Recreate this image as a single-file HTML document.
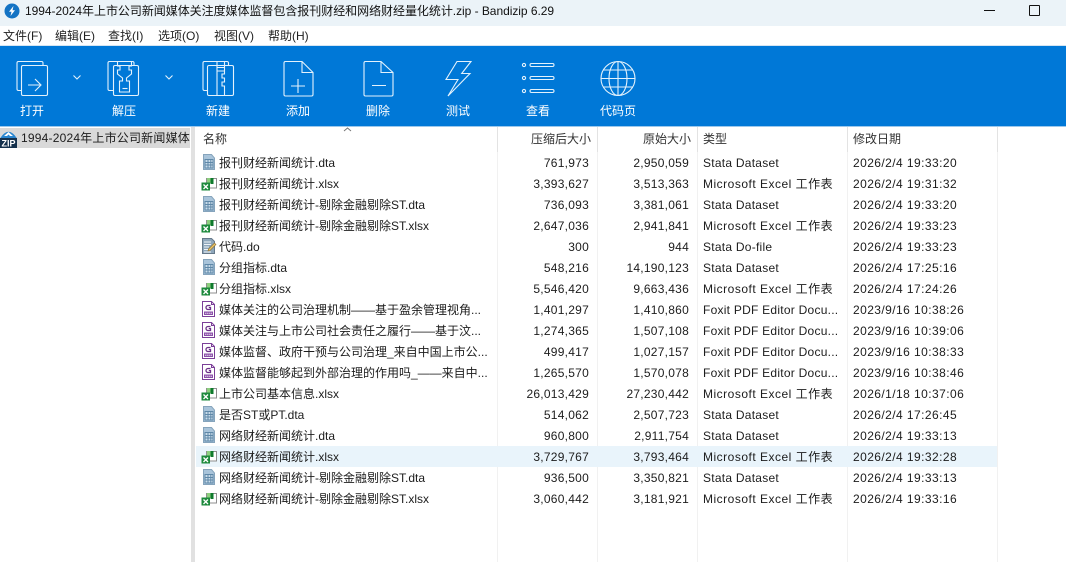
<!DOCTYPE html>
<html><head><meta charset="utf-8"><style>
html,body{margin:0;padding:0}
body{position:relative;width:1066px;height:562px;overflow:hidden;background:#fff;font:12px/21px "Liberation Sans","Noto Sans CJK SC",sans-serif;color:#1c1c1c}
div,span,svg{position:absolute}
#title{left:0;top:0;width:1066px;height:26px;background:#ebf3f8}
#title span{left:25px;top:0;line-height:22px;white-space:nowrap;color:#111;letter-spacing:-.04px}
.m{top:26px;line-height:20px;white-space:nowrap;color:#222}
#tb{left:0;top:46px;width:1066px;height:80px;background:#0078d7}
.tl{top:101px;width:60px;text-align:center;color:#fff;line-height:20px}
.ic{fill:none;stroke:#e4f2fc;stroke-width:1.1}
.r{left:0;width:1066px;height:21px;line-height:21px;white-space:nowrap}
.r span{top:1px}
.n{left:219px}
.a{right:477px;letter-spacing:.25px}
.b{right:377px;letter-spacing:.25px}
.t{left:703px;letter-spacing:.25px}
.x{letter-spacing:.5px}
.d{left:853px;letter-spacing:.43px}
.r svg{left:201px;top:2px;width:16px;height:16px}
.h{top:129px;line-height:21px;color:#333}
.v{top:127px;width:1px;height:435px;background:#f1f1f1}
.vh{top:127px;width:1px;height:25px;background:#e3e3e3}
</style></head><body>
<svg width="0" height="0" style="left:0;top:0"><defs>
<symbol id="dta" viewBox="0 0 16 16"><path d="M2.500.5h8l3 3.500v11.500h-11z" fill="#a9c4da" stroke="#86a4bc"/><path d="M4 5.500h8v8.500H4z" fill="#c9dcea" stroke="#5f88a8"/><path d="M4 8.500h8M4 11h8M7 5.500v8.500M9.800 5.500v8.500" stroke="#5f88a8"/></symbol>
<symbol id="xl" viewBox="0 0 16 16"><path d="M5.500 3.500h10v9.500h-10z" fill="#fff" stroke="#8f8f8f"/><path d="M6 3h4v5H6z" fill="#8ccf7e"/><path d="M9.500 3h3v6h-3z" fill="#0f7a2d"/><path d="M.5 7.500h8.500v8H.5z" fill="#1d8a3c"/><path d="M2.500 9.500l4.500 4.500M7 9.500l-4.500 4.500" stroke="#fff" stroke-width="1.300"/></symbol>
<symbol id="do" viewBox="0 0 16 16"><path d="M1.500.5h9l3 3v12h-12z" fill="#8fa7bb" stroke="#66798a"/><path d="M3 4h7M3 6.500h7M3 9h5M3 11.500h4M3 14h7" stroke="#eef3f7"/><path d="M7.500 11l6-6 1.500 1.500-6 6-2 .5z" fill="#e9c46a" stroke="#8a6a2a" stroke-width=".6"/></symbol>
<symbol id="pdf" viewBox="0 0 16 16"><path d="M1.500.5h9l3 3v12h-12z" fill="#fff" stroke="#7b3f98"/><path d="M10.500.5v3h3" fill="none" stroke="#7b3f98"/><path d="M9.500 4.500H7a1.800 1.800 0 0 0 0 4h2.500V6.500H7.800" fill="none" stroke="#6b2f88" stroke-width="1.300"/><path d="M3 10.500h9v3.500H3z" fill="#8a4fa8"/><path d="M4 12.200h7" stroke="#e8d6f0" stroke-dasharray="1.500 .5"/></symbol>
</defs></svg>

<div id="title"><span>1994-2024年上市公司新闻媒体关注度媒体监督包含报刊财经和网络财经量化统计.zip - Bandizip 6.29</span></div>
<svg style="left:4px;top:3px" width="16" height="16" viewBox="0 0 16 16"><circle cx="8" cy="8" r="7.500" fill="#1373c4"/><path d="M9.500 3L5 8.800h2.500L6.500 13 11 7.200H8.500z" fill="#fff"/></svg>
<div style="left:984px;top:10px;width:11px;height:1px;background:#111"></div>
<div style="left:1029px;top:5px;width:9px;height:9px;border:1px solid #111;border-radius:1px"></div>

<div class="m" style="left:3px">文件(F)</div>
<div class="m" style="left:55px">编辑(E)</div>
<div class="m" style="left:108px">查找(I)</div>
<div class="m" style="left:158px">选项(O)</div>
<div class="m" style="left:214px">视图(V)</div>
<div class="m" style="left:268px">帮助(H)</div>

<div id="tb"></div>
<div style="left:0;top:45px;width:1066px;height:1px;background:#d5e5f2"></div>
<div style="left:0;top:126px;width:1066px;height:1px;background:#9cc8ec"></div>

<svg class="ic" style="left:0;top:46px" width="1066" height="80" viewBox="0 46 1066 80">
<path d="M21 90.500h-2.500a1.500 1.500 0 0 1-1.500-1.500V63a1.500 1.500 0 0 1 1.500-1.500h23a1.500 1.500 0 0 1 1.500 1.500v2"/>
<rect x="21.500" y="65.500" width="26" height="30" rx="1.500"/><path d="M28 85h12M35 79l6 6-6 6"/>
<path d="M73.500 75.500l3.500 3.500 3.500-3.500"/>
<path d="M113 90.500h-3.500a1.500 1.500 0 0 1-1.500-1.500V63a1.500 1.500 0 0 1 1.500-1.500h23a1.500 1.500 0 0 1 1.500 1.500v2"/>
<rect x="113.500" y="65.500" width="25" height="30" rx="1.500"/>
<path d="M117.500 62v4h2.500v4h-2.500v4l5 4v3h-3v11h10v-11h-3v-3l5-4v-4h-2.500v-4h2.500v-4"/><path d="M122.500 88.500h5"/>
<path d="M165.500 75.500l3.500 3.500 3.500-3.500"/>
<path d="M207 90.500h-2.500a1.500 1.500 0 0 1-1.500-1.500V63a1.500 1.500 0 0 1 1.500-1.500h22.500a1.500 1.500 0 0 1 1.500 1.500v2"/>
<rect x="207.500" y="65.500" width="26" height="30" rx="1.500"/>
<path d="M217 62v33.500M224.500 62v12h-2.500v4h2.500v4h-2.500v4h2.500v9.500M217 67.500h7.500v3.500H217z"/>
<path d="M285.500 61.500h16.500l11 11v22a1.500 1.500 0 0 1-1.500 1.500h-26a1.500 1.500 0 0 1-1.500-1.500V63a1.500 1.500 0 0 1 1.500-1.500z"/><path d="M302 61.500v11h11M291 86h14M298 79v14"/>
<path d="M365.500 61.500h15.500l12 11v22a1.500 1.500 0 0 1-1.500 1.500h-26a1.500 1.500 0 0 1-1.500-1.500V63a1.500 1.500 0 0 1 1.500-1.500z"/><path d="M381 61.500v11h12M372 85.500h14"/>
<path d="M457 61.500h14L461.700 73.500H470L448 96 458 79.500H446z"/>
<circle cx="524" cy="65" r="1.600"/><circle cx="524" cy="78" r="1.600"/><circle cx="524" cy="91" r="1.600"/>
<rect x="530" y="63.500" width="24" height="3" rx="1.500"/><rect x="530" y="76.500" width="24" height="3" rx="1.500"/><rect x="530" y="89.500" width="24" height="3" rx="1.500"/>
<circle cx="618" cy="78.500" r="17"/><ellipse cx="618" cy="78.500" rx="9" ry="17"/><path d="M618 61.500v34M601 78.500h34M603.500 70h29M603.500 87h29"/>
</svg>

<div class="tl" style="left:2px">打开</div>
<div class="tl" style="left:94px">解压</div>
<div class="tl" style="left:188px">新建</div>
<div class="tl" style="left:268px">添加</div>
<div class="tl" style="left:348px">删除</div>
<div class="tl" style="left:428px">测试</div>
<div class="tl" style="left:508px">查看</div>
<div class="tl" style="left:588px">代码页</div>

<div style="left:0;top:128px;width:190px;height:20px;background:#d9d9d9"></div>
<svg style="left:0;top:128px" width="17" height="20" viewBox="0 0 17 20"><path d="M0 10.500Q8.500-3 17 10.500z" fill="#2a86d0"/><path d="M4 8l4.500-4L13 8H10L8.500 6.500 7 8z" fill="#fff"/><rect x="0" y="10" width="17" height="10" fill="#15314d"/><text x="8.500" y="18.500" font-size="9" font-weight="bold" text-anchor="middle" fill="#fff" font-family="Liberation Sans">ZIP</text></svg>
<div style="left:21px;top:128px;line-height:21px;white-space:nowrap;letter-spacing:.2px;width:169px;overflow:hidden">1994-2024年上市公司新闻媒体</div>
<div style="left:191px;top:127px;width:4px;height:435px;background:#e1e1e1"></div>

<div class="v" style="left:497px"></div><div class="v" style="left:597px"></div><div class="v" style="left:697px"></div><div class="v" style="left:847px"></div><div class="v" style="left:997px"></div>
<div class="vh" style="left:497px"></div><div class="vh" style="left:597px"></div><div class="vh" style="left:697px"></div><div class="vh" style="left:847px"></div><div class="vh" style="left:997px"></div>
<div class="h" style="left:203px">名称</div>
<svg style="left:343px;top:127px" width="9" height="5" viewBox="0 0 9 5"><path d="M1 4l3.500-3L8 4" fill="none" stroke="#777"/></svg>
<div class="h" style="right:475px">压缩后大小</div>
<div class="h" style="right:375px">原始大小</div>
<div class="h" style="left:703px">类型</div>
<div class="h" style="left:853px">修改日期</div>

<div style="left:196px;top:446px;width:801px;height:21px;background:#e9f4fb"></div>

<div class="r" style="top:152px"><svg><use href="#dta"/></svg><span class="n">报刊财经新闻统计.dta</span><span class="a">761,973</span><span class="b">2,950,059</span><span class="t">Stata Dataset</span><span class="d">2026/2/4 19:33:20</span></div>
<div class="r" style="top:173px"><svg><use href="#xl"/></svg><span class="n">报刊财经新闻统计.xlsx</span><span class="a">3,393,627</span><span class="b">3,513,363</span><span class="t x">Microsoft Excel 工作表</span><span class="d">2026/2/4 19:31:32</span></div>
<div class="r" style="top:194px"><svg><use href="#dta"/></svg><span class="n">报刊财经新闻统计-剔除金融剔除ST.dta</span><span class="a">736,093</span><span class="b">3,381,061</span><span class="t">Stata Dataset</span><span class="d">2026/2/4 19:33:20</span></div>
<div class="r" style="top:215px"><svg><use href="#xl"/></svg><span class="n">报刊财经新闻统计-剔除金融剔除ST.xlsx</span><span class="a">2,647,036</span><span class="b">2,941,841</span><span class="t x">Microsoft Excel 工作表</span><span class="d">2026/2/4 19:33:23</span></div>
<div class="r" style="top:236px"><svg><use href="#do"/></svg><span class="n">代码.do</span><span class="a">300</span><span class="b">944</span><span class="t">Stata Do-file</span><span class="d">2026/2/4 19:33:23</span></div>
<div class="r" style="top:257px"><svg><use href="#dta"/></svg><span class="n">分组指标.dta</span><span class="a">548,216</span><span class="b">14,190,123</span><span class="t">Stata Dataset</span><span class="d">2026/2/4 17:25:16</span></div>
<div class="r" style="top:278px"><svg><use href="#xl"/></svg><span class="n">分组指标.xlsx</span><span class="a">5,546,420</span><span class="b">9,663,436</span><span class="t x">Microsoft Excel 工作表</span><span class="d">2026/2/4 17:24:26</span></div>
<div class="r" style="top:299px"><svg><use href="#pdf"/></svg><span class="n">媒体关注的公司治理机制——基于盈余管理视角...</span><span class="a">1,401,297</span><span class="b">1,410,860</span><span class="t">Foxit PDF Editor Docu...</span><span class="d">2023/9/16 10:38:26</span></div>
<div class="r" style="top:320px"><svg><use href="#pdf"/></svg><span class="n">媒体关注与上市公司社会责任之履行——基于汶...</span><span class="a">1,274,365</span><span class="b">1,507,108</span><span class="t">Foxit PDF Editor Docu...</span><span class="d">2023/9/16 10:39:06</span></div>
<div class="r" style="top:341px"><svg><use href="#pdf"/></svg><span class="n">媒体监督、政府干预与公司治理_来自中国上市公...</span><span class="a">499,417</span><span class="b">1,027,157</span><span class="t">Foxit PDF Editor Docu...</span><span class="d">2023/9/16 10:38:33</span></div>
<div class="r" style="top:362px"><svg><use href="#pdf"/></svg><span class="n">媒体监督能够起到外部治理的作用吗_——来自中...</span><span class="a">1,265,570</span><span class="b">1,570,078</span><span class="t">Foxit PDF Editor Docu...</span><span class="d">2023/9/16 10:38:46</span></div>
<div class="r" style="top:383px"><svg><use href="#xl"/></svg><span class="n">上市公司基本信息.xlsx</span><span class="a">26,013,429</span><span class="b">27,230,442</span><span class="t x">Microsoft Excel 工作表</span><span class="d">2026/1/18 10:37:06</span></div>
<div class="r" style="top:404px"><svg><use href="#dta"/></svg><span class="n">是否ST或PT.dta</span><span class="a">514,062</span><span class="b">2,507,723</span><span class="t">Stata Dataset</span><span class="d">2026/2/4 17:26:45</span></div>
<div class="r" style="top:425px"><svg><use href="#dta"/></svg><span class="n">网络财经新闻统计.dta</span><span class="a">960,800</span><span class="b">2,911,754</span><span class="t">Stata Dataset</span><span class="d">2026/2/4 19:33:13</span></div>
<div class="r" style="top:446px"><svg><use href="#xl"/></svg><span class="n">网络财经新闻统计.xlsx</span><span class="a">3,729,767</span><span class="b">3,793,464</span><span class="t x">Microsoft Excel 工作表</span><span class="d">2026/2/4 19:32:28</span></div>
<div class="r" style="top:467px"><svg><use href="#dta"/></svg><span class="n">网络财经新闻统计-剔除金融剔除ST.dta</span><span class="a">936,500</span><span class="b">3,350,821</span><span class="t">Stata Dataset</span><span class="d">2026/2/4 19:33:13</span></div>
<div class="r" style="top:488px"><svg><use href="#xl"/></svg><span class="n">网络财经新闻统计-剔除金融剔除ST.xlsx</span><span class="a">3,060,442</span><span class="b">3,181,921</span><span class="t x">Microsoft Excel 工作表</span><span class="d">2026/2/4 19:33:16</span></div>
</body></html>
